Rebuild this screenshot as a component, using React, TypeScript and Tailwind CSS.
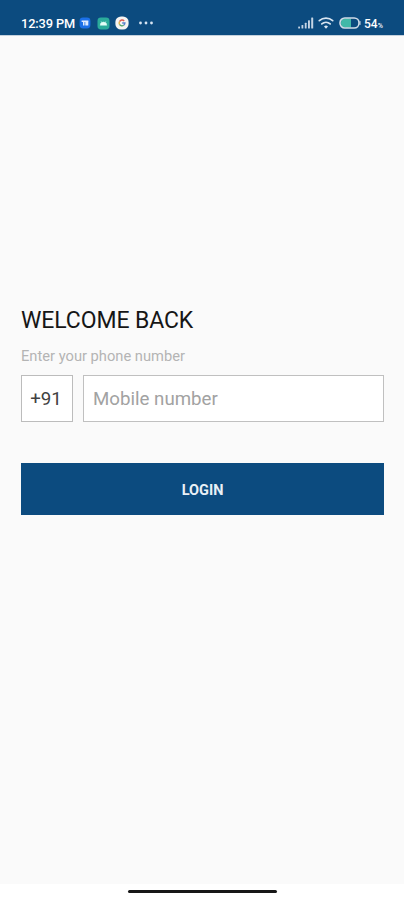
function StatusBar() {
  return (
    <header className="flex h-[35px] items-start justify-between bg-[#0c4b7f] pl-[21px] pr-5 pt-[15px] text-white">
      <div className="flex h-4 items-center">
        <span className="w-[54px] whitespace-nowrap pt-px text-[12.8px] font-medium leading-4 tracking-[-0.12px]">12:39 PM</span>
        <svg className="ml-[4px] h-3 w-3" viewBox="0 0 12 12">
          <rect x="0.6" y="0.6" width="10.8" height="10.8" rx="3.4" fill="#1b70e8" />
          <path d="M2.6 3.6h6.8v1.3H2.6zM4 4.5h1.5v4H4zM6.3 4.5h3v4h-3z" fill="#dceaff" />
        </svg>
        <svg className="ml-[6px] h-[13px] w-[13px]" viewBox="0 0 13 13">
          <rect x="0.5" y="0.5" width="12" height="12" rx="3.4" fill="#2bab9b" />
          <path d="M3.2 8.3a3.3 3.3 0 0 1 6.6 0zM4 4.2l1 1.4M9 4.2L8 5.6" fill="#e5fff8" stroke="#d5f5ee" strokeWidth="0.5" />
        </svg>
        <svg className="ml-[5px] h-[14px] w-[14px]" viewBox="0 0 14 14">
          <rect x="0.4" y="0.4" width="13.2" height="13.2" rx="5.6" fill="#f5f3f1" />
          <g fill="none" strokeWidth="1.4">
            <path d="M9.2 4.9A2.9 2.9 0 0 0 4.5 5.6" stroke="#dc5b50" />
            <path d="M4.5 5.6a2.9 2.9 0 0 0 0 2.8" stroke="#e4b343" />
            <path d="M4.5 8.4a2.9 2.9 0 0 0 4.2 0.9" stroke="#58a66c" />
            <path d="M8.7 9.3a2.9 2.9 0 0 0 1.2-2.3H7.2" stroke="#5680cc" />
          </g>
        </svg>
        <svg className="ml-[9px] h-4 w-4" viewBox="0 0 16 16" fill="#d7e5f3">
          <circle cx="2.5" cy="8" r="1.4" />
          <circle cx="8" cy="8" r="1.4" />
          <circle cx="13.5" cy="8" r="1.4" />
        </svg>
      </div>
      <div className="flex h-4 items-center">
        <svg className="h-3 w-4" viewBox="0 0 16 12" fill="#c5d4e4">
          <rect x="0.2" y="9.5" width="1.8" height="2" rx="0.5" />
          <rect x="3.5" y="8" width="1.8" height="3.5" rx="0.5" />
          <rect x="6.8" y="5.8" width="1.8" height="5.7" rx="0.5" />
          <rect x="10" y="3.2" width="1.9" height="8.3" rx="0.5" />
          <rect x="13.2" y="0.4" width="2" height="11.1" rx="0.5" />
        </svg>
        <svg className="ml-[4px] h-3 w-4" viewBox="0 0 16 12" fill="none" stroke="#d9e5f1" strokeWidth="1.7" strokeLinecap="round">
          <path d="M1.3 3.7a10.3 10.3 0 0 1 13.4 0M3.8 6.9a6.5 6.5 0 0 1 8.4 0" />
          <path d="M6 9.4a3.1 3.1 0 0 1 4 0L8 11.8z" fill="#d9e5f1" stroke="none" />
        </svg>
        <svg className="ml-[5px] h-3 w-[22px]" viewBox="0 0 22 12">
          <rect x="2" y="1.5" width="10" height="9" rx="4" fill="#41b8a8" />
          <rect x="7" y="1.5" width="5" height="9" fill="#41b8a8" />
          <rect x="1" y="1" width="19" height="10" rx="4.8" fill="none" stroke="#d0dce8" strokeWidth="1.6" />
          <path d="M21 4.5v3" stroke="#d0dce8" strokeWidth="1" strokeLinecap="round" />
        </svg>
        <span className="ml-[3px] flex w-5 items-baseline whitespace-nowrap pt-px text-[12px] font-medium leading-4">
          54<span className="text-[7px] leading-none">%</span>
        </span>
      </div>
    </header>
  );
}

export default function App() {
  return (
    <div className="flex h-[900px] w-[404px] flex-col overflow-hidden bg-[#fafafa] font-['Roboto',sans-serif]">
      <StatusBar />
      <main className="flex flex-1 flex-col border-t border-[#c4d1dd] pl-[21px] pr-5 pt-[271px]">
        <h1 className="h-7 whitespace-nowrap text-[23px] leading-7 tracking-[-0.1px] text-[#161616]">WELCOME BACK</h1>
        <label htmlFor="phone" className="mt-[11px] h-5 self-start whitespace-nowrap text-[14.7px] leading-5 text-[#b4b4b4]">
          Enter your phone number
        </label>
        <div className="mt-[9px] flex h-[47px] gap-[10px]">
          <div className="flex w-[52px] items-center justify-center border border-[#bcbcbc] bg-white pr-[2px] pt-[2px] text-[18.7px] text-[#414141]">
            +91
          </div>
          <input
            id="phone"
            type="tel"
            placeholder="Mobile number"
            className="min-w-0 flex-1 rounded-none border border-[#c0c0c0] bg-white px-[9px] pt-[2px] text-[18.7px] text-[#414141] outline-none placeholder:text-[#a2a2a2]"
          />
        </div>
        <button className="mt-[41px] h-[52px] bg-[#0c4b7f] pt-[3px] text-[14.5px] font-bold text-[#e9f0f6]">LOGIN</button>
      </main>
      <footer className="flex h-4 justify-center bg-white pt-[6px]">
        <div className="h-[3px] w-[149px] rounded-full bg-[#171717]" />
      </footer>
    </div>
  );
}
